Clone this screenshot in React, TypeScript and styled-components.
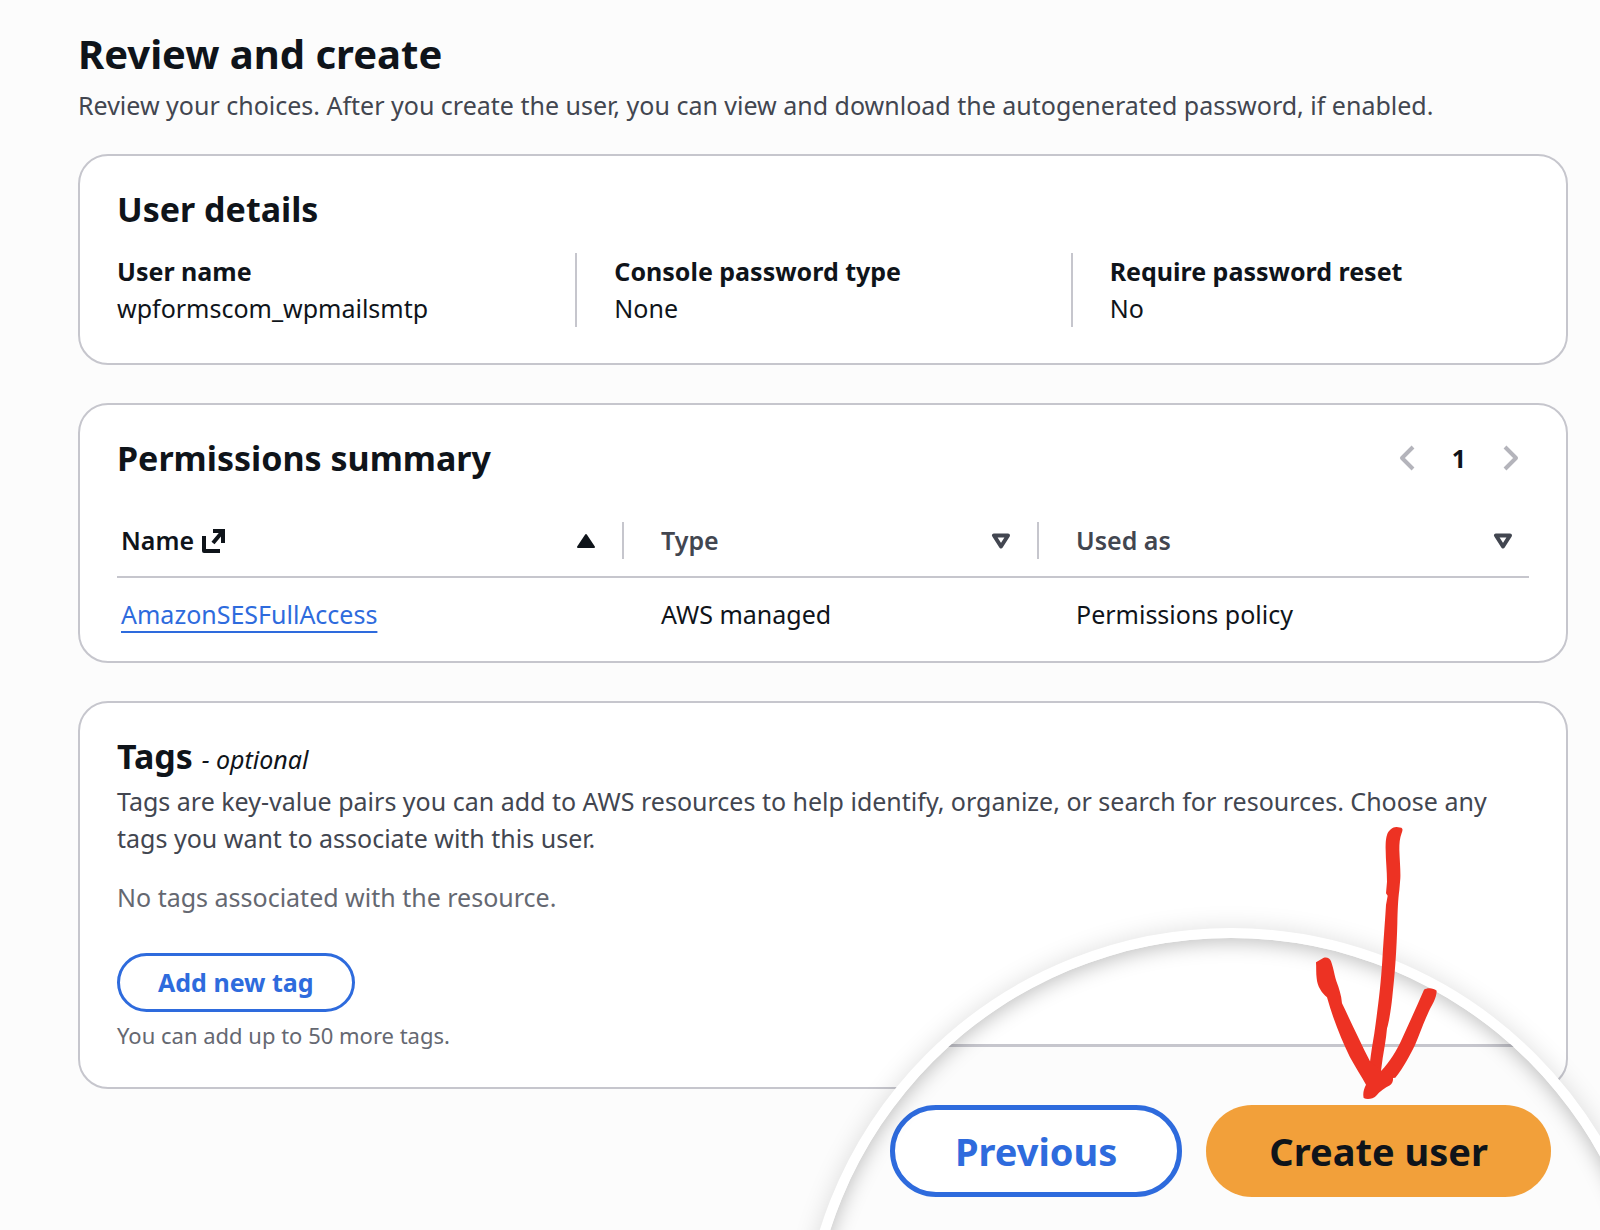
import React from "react";
import styled, { createGlobalStyle } from "styled-components";

const color = {
  ink: "#0f141a",
  body: "#424650",
  muted: "#656871",
  line: "#c6c6cd",
  blue: "#2e6bdd",
  orange: "#f2a03a",
  red: "#ed3223",
  page: "#fcfcfc",
  disabled: "#b4b4bb",
};

const GlobalStyle = createGlobalStyle`
  *, *::before, *::after { box-sizing: border-box; }
  body {
    margin: 0;
    background: ${color.page};
    color: ${color.ink};
    font-family: "Noto Sans", "Open Sans", sans-serif;
    font-size: 25px;
    line-height: 37px;
  }
  h1, h2, p, dl, dt, dd { margin: 0; }
  button { font: inherit; color: inherit; cursor: pointer; }
`;

const Page = styled.div`
  position: relative;
  min-height: 100vh;
  overflow: hidden;
  padding: 26px 32px 100px 78px;
`;

const PageHeader = styled.header`
  display: flex;
  flex-direction: column;
  gap: 5px;
  margin-bottom: 30px;
`;

const PageTitle = styled.h1`
  font-size: 40px;
  line-height: 56px;
  font-weight: 700;
`;

const Description = styled.p`
  color: ${color.body};
`;

const Stack = styled.main`
  display: flex;
  flex-direction: column;
  gap: 38px;
`;

const Card = styled.section<{ $bottom?: number }>`
  padding: 29px 37px ${(p) => p.$bottom ?? 36}px;
  background: #fff;
  border: 2px solid ${color.line};
  border-radius: 30px;
`;

const CardHeader = styled.div`
  display: flex;
  align-items: center;
  justify-content: space-between;
`;

const CardTitle = styled.h2`
  font-size: 34px;
  line-height: 48px;
  font-weight: 700;
`;

const Optional = styled.em`
  font-size: 25px;
  font-weight: 400;
`;

const Details = styled.dl`
  display: grid;
  grid-template-columns: repeat(3, 1fr);
  margin: 20px -37px 0;
`;

const Detail = styled.div`
  padding: 0 37px;

  & + & {
    border-left: 2px solid ${color.line};
  }
`;

const Term = styled.dt`
  font-weight: 700;
`;

const Value = styled.dd``;

const Pager = styled.nav`
  display: flex;
  align-items: center;
  gap: 28px;
  padding-right: 6px;
`;

const PagerArrow = styled.button`
  display: flex;
  padding: 4px;
  background: none;
  border: 0;
  color: ${color.disabled};
`;

const PagerPage = styled.button`
  width: 24px;
  padding: 0;
  background: none;
  border: 0;
  font-weight: 700;
  text-align: center;
`;

const Table = styled.table`
  width: 100%;
  margin-top: 40px;
  table-layout: fixed;
  border-collapse: separate;
  border-spacing: 0;
  text-align: left;
`;

const Column = styled.col<{ $width?: number }>`
  width: ${(p) => (p.$width ? `${p.$width}px` : "auto")};
`;

const HeaderCell = styled.th`
  padding: 0 0 17px;
  border-bottom: 2px solid ${color.line};
`;

const HeaderInner = styled.div<{ $sorted?: boolean; $first?: boolean; $last?: boolean }>`
  display: flex;
  align-items: center;
  justify-content: space-between;
  padding: 0 ${(p) => (p.$last ? 16 : 26)}px 0 ${(p) => (p.$first ? 4 : 37)}px;
  border-right: ${(p) => (p.$last ? "0" : `2px solid ${color.line}`)};
  color: ${(p) => (p.$sorted ? color.ink : color.body)};
  font-weight: 600;
`;

const HeaderLabel = styled.span`
  display: flex;
  align-items: center;
  gap: 8px;
`;

const SortButton = styled.button`
  display: flex;
  padding: 0;
  background: none;
  border: 0;
`;

const Cell = styled.td<{ $first?: boolean }>`
  padding: 18px 0 17px ${(p) => (p.$first ? 4 : 37)}px;
`;

const PolicyLink = styled.a`
  color: ${color.blue};
  text-decoration: underline;
  text-decoration-thickness: 2px;
  text-underline-offset: 7px;
`;

const EmptyText = styled.p`
  margin: 22px 0 37px;
  color: ${color.muted};
`;

const Hint = styled.p`
  margin-top: 7px;
  color: ${color.muted};
  font-size: 22px;
  line-height: 32px;
`;

const OutlineButton = styled.button<{ $large?: boolean }>`
  height: ${(p) => (p.$large ? 92 : 59)}px;
  padding: 0 ${(p) => (p.$large ? 60 : 38)}px;
  background: #fff;
  border: ${(p) => (p.$large ? 5 : 3)}px solid ${color.blue};
  border-radius: 46px;
  color: ${color.blue};
  font-weight: 700;
  font-size: ${(p) => (p.$large ? 38 : 25)}px;
`;

const PrimaryButton = styled.button`
  height: 92px;
  padding: 0 63px;
  background: ${color.orange};
  border: 0;
  border-radius: 46px;
  font-weight: 700;
  font-size: 38px;
`;

/* Magnified view of the form actions, floating over the page corner. */
const Lens = styled.div`
  position: absolute;
  right: -62px;
  bottom: -560px;
  width: 862px;
  height: 862px;
  overflow: hidden;
  background: ${color.page};
  border: 10px solid #fff;
  border-radius: 50%;
  box-shadow: 0 0 24px rgba(0, 0, 0, 0.13);

  &::after {
    content: "";
    position: absolute;
    inset: 0;
    border-radius: 50%;
    box-shadow: inset 0 4px 20px rgba(0, 0, 0, 0.25);
    pointer-events: none;
  }
`;

const LensCardEdge = styled.div`
  height: 109px;
  background: #fff;
  border-bottom: 3px solid ${color.line};
`;

const LensActions = styled.div`
  display: flex;
  gap: 24px;
  padding: 58px 0 0 80px;
`;

const Arrow = styled.svg`
  position: absolute;
  right: 120px;
  bottom: 120px;
  width: 200px;
  height: 300px;
  pointer-events: none;
`;

const Chevron = ({ next }: { next?: boolean }) => (
  <svg width="16" height="26" viewBox="0 0 16 26" fill="none" stroke="currentColor" strokeWidth="4" aria-hidden="true">
    <path d={next ? "M2 2 13 13 2 24" : "M14 2 3 13 14 24"} strokeLinejoin="round" />
  </svg>
);

const SortIcon = ({ ascending }: { ascending?: boolean }) => (
  <svg width="20" height="16" viewBox="0 0 20 16" aria-hidden="true">
    {ascending ? (
      <path d="M10 2 18 14H2Z" fill={color.ink} stroke={color.ink} strokeWidth="2" strokeLinejoin="round" />
    ) : (
      <path d="M3 2.5H17L10 13.5Z" fill="none" stroke={color.body} strokeWidth="4" strokeLinejoin="round" />
    )}
  </svg>
);

const ExternalIcon = () => (
  <svg width="24" height="24" viewBox="0 0 24 24" fill="none" stroke={color.ink} strokeWidth="4" aria-hidden="true">
    <path d="M2 7V22H18" strokeLinejoin="round" />
    <path d="M11 2H21V14M21 2 11 14" />
  </svg>
);

export default function App() {
  return (
    <>
      <GlobalStyle />
      <Page>
        <PageHeader>
          <PageTitle>Review and create</PageTitle>
          <Description>
            Review your choices. After you create the user, you can view and download the autogenerated password, if
            enabled.
          </Description>
        </PageHeader>

        <Stack>
          <Card>
            <CardTitle>User details</CardTitle>
            <Details>
              <Detail>
                <Term>User name</Term>
                <Value>wpformscom_wpmailsmtp</Value>
              </Detail>
              <Detail>
                <Term>Console password type</Term>
                <Value>None</Value>
              </Detail>
              <Detail>
                <Term>Require password reset</Term>
                <Value>No</Value>
              </Detail>
            </Details>
          </Card>

          <Card $bottom={11}>
            <CardHeader>
              <CardTitle>Permissions summary</CardTitle>
              <Pager aria-label="Permissions pages">
                <PagerArrow type="button" aria-label="Previous page">
                  <Chevron />
                </PagerArrow>
                <PagerPage type="button">1</PagerPage>
                <PagerArrow type="button" aria-label="Next page">
                  <Chevron next />
                </PagerArrow>
              </Pager>
            </CardHeader>
            <Table>
              <colgroup>
                <Column $width={507} />
                <Column $width={415} />
                <Column />
              </colgroup>
              <thead>
                <tr>
                  <HeaderCell scope="col" aria-sort="ascending">
                    <HeaderInner $sorted $first>
                      <HeaderLabel>
                        Name
                        <ExternalIcon />
                      </HeaderLabel>
                      <SortButton type="button" aria-label="Sort by name">
                        <SortIcon ascending />
                      </SortButton>
                    </HeaderInner>
                  </HeaderCell>
                  <HeaderCell scope="col">
                    <HeaderInner>
                      <HeaderLabel>Type</HeaderLabel>
                      <SortButton type="button" aria-label="Sort by type">
                        <SortIcon />
                      </SortButton>
                    </HeaderInner>
                  </HeaderCell>
                  <HeaderCell scope="col">
                    <HeaderInner $last>
                      <HeaderLabel>Used as</HeaderLabel>
                      <SortButton type="button" aria-label="Sort by use">
                        <SortIcon />
                      </SortButton>
                    </HeaderInner>
                  </HeaderCell>
                </tr>
              </thead>
              <tbody>
                <tr>
                  <Cell $first>
                    <PolicyLink href="#policy">AmazonSESFullAccess</PolicyLink>
                  </Cell>
                  <Cell>AWS managed</Cell>
                  <Cell>Permissions policy</Cell>
                </tr>
              </tbody>
            </Table>
          </Card>

          <Card>
            <CardTitle>
              Tags <Optional>- optional</Optional>
            </CardTitle>
            <Description>
              Tags are key-value pairs you can add to AWS resources to help identify, organize, or search for resources.
              Choose any tags you want to associate with this user.
            </Description>
            <EmptyText>No tags associated with the resource.</EmptyText>
            <OutlineButton type="button">Add new tag</OutlineButton>
            <Hint>You can add up to 50 more tags.</Hint>
          </Card>
        </Stack>

        <Lens>
          <LensCardEdge />
          <LensActions>
            <OutlineButton type="button" $large>
              Previous
            </OutlineButton>
            <PrimaryButton type="button">Create user</PrimaryButton>
          </LensActions>
        </Lens>

        <Arrow viewBox="0 0 600 900" aria-hidden="true">
          <g fill={color.red}>
            <path d="M321 75C325 60 340 50 350 51L364 53C369 56 368 62 365 69C359 85 358 100 358 120C359 150 362 180 361 205L358 240C354 270 353 300 352 340C350 420 344 500 337 560C333 600 326 640 321 655C318 690 312 720 308 745L302 790L270 790V756C273 730 278 700 283 670C294 590 302 530 307 450C312 370 316 320 318 285L323 257L318 250L321 215C321 180 317 150 317 120C317 100 317 88 321 75Z" />
            <path d="M108 457L130 444C140 440 150 445 153 454C161 475 164 500 170 516C177 535 184 555 186 580C210 630 240 695 270 754L304 782C330 755 350 720 362 695C385 645 410 590 432 539C440 532 462 533 470 542C470 565 455 585 446 605C430 640 418 675 405 705C390 735 370 775 346 803L339 804C340 812 337 820 330 826C315 834 300 843 288 858C280 866 262 870 251 864C248 850 251 838 258 824C245 800 225 770 210 742C185 690 160 630 141 562C125 548 112 530 110 505C108 490 109 470 108 457Z" />
          </g>
        </Arrow>
      </Page>
    </>
  );
}
